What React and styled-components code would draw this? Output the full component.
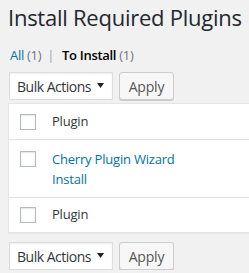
import React from "react";
import styled, { createGlobalStyle } from "styled-components";

const GlobalStyle = createGlobalStyle`
    html, body {
        margin: 0;
        padding: 0;
        background: #f1f1f1;
        overflow: hidden;
    }
    body {
        font-family: "Open Sans", "Noto Sans", sans-serif;
        font-size: 13px;
        letter-spacing: -0.2px;
        color: #23282d;
    }
`;

function BulkBar({ bottom }) {
    return (
        <TableNav $bottom={bottom}>
            <Select>
                <span>Bulk Actions</span>
                <Arrow width="7" height="5" viewBox="0 0 7 5">
                    <polygon points="0,0 7,0 3.5,5" fill="#222" />
                </Arrow>
            </Select>
            <Button>Apply</Button>
        </TableNav>
    );
}

function App() {
    const rows = [
        { kind: "head", name: "Plugin" },
        { kind: "body", name: "Cherry Plugin Wizard", action: "Install" },
        { kind: "foot", name: "Plugin" },
    ];

    return (
        <Wrap>
            <GlobalStyle />
            <Title>Install Required Plugins</Title>
            <Filters>
                <FilterLink href="#">All</FilterLink>
                <Count> (1)</Count>
                <Sep>|</Sep>
                <Current>To Install</Current>
                <Count> (1)</Count>
            </Filters>
            <BulkBar />
            <Table>
                {rows.map((row, i) => (
                    <Row key={i} $kind={row.kind}>
                        <CheckCell $kind={row.kind}>
                            <Checkbox />
                        </CheckCell>
                        <NameCell $kind={row.kind}>
                            {row.kind === "body" ? (
                                <>
                                    <PluginLink href="#">{row.name}</PluginLink>
                                    <ActionLink href="#">{row.action}</ActionLink>
                                </>
                            ) : (
                                row.name
                            )}
                        </NameCell>
                    </Row>
                ))}
            </Table>
            <BulkBar bottom />
        </Wrap>
    );
}
export default App;

const Wrap = styled.div`
    padding: 0 0 0 8px;
    width: 300px;
`;
const Title = styled.h1`
    margin: 0;
    padding: 3px 0 0 0;
    font-size: 22px;
    font-weight: 400;
    line-height: 29px;
    letter-spacing: -0.25px;
    color: #23282d;
    white-space: nowrap;
`;
const Filters = styled.div`
    display: flex;
    align-items: baseline;
    margin-top: 12px;
    padding-left: 2px;
    line-height: 22px;
    white-space: pre;
    letter-spacing: -0.3px;
`;
const FilterLink = styled.a`
    color: #0073aa;
    text-decoration: none;
`;
const Current = styled.span`
    color: #000;
    font-weight: 600;
`;
const Count = styled.span`
    color: #72777c;
`;
const Sep = styled.span`
    color: #a0a5aa;
    margin: 0 8px 0 6px;
`;
const TableNav = styled.div`
    display: flex;
    gap: 6px;
    margin-top: ${(p) => (p.$bottom ? "9px" : "6px")};
    padding-left: 1px;
`;
const Select = styled.div`
    box-sizing: border-box;
    display: flex;
    align-items: center;
    justify-content: space-between;
    width: 104px;
    height: 28px;
    padding: 0 8px 0 7px;
    background: #fff;
    border: 1px solid #ddd;
    box-shadow: inset 0 1px 2px rgba(0, 0, 0, 0.07);
    color: #32373c;
    font-size: 14px;
    letter-spacing: -0.5px;
`;
const Arrow = styled.svg`
    display: block;
    margin-top: -1px;
`;
const Button = styled.div`
    box-sizing: border-box;
    display: flex;
    align-items: center;
    justify-content: center;
    width: 55px;
    height: 28px;
    background: #f7f7f7;
    border: 1px solid #ccc;
    border-radius: 3px;
    box-shadow: 0 1px 0 #ccc;
    color: #555;
    font-size: 14px;
`;
const Table = styled.div`
    margin-top: 3px;
    background: #fff;
    border: 1px solid #e5e5e5;
    box-shadow: 0 1px 1px rgba(0, 0, 0, 0.04);
`;
const Row = styled.div`
    display: flex;
    box-sizing: border-box;
    height: ${(p) => (p.$kind === "body" ? "58px" : p.$kind === "head" ? "36px" : "34px")};
    border-bottom: ${(p) => (p.$kind === "foot" ? "none" : "1px solid #e1e1e1")};
`;
const CheckCell = styled.div`
    width: 43px;
    padding: ${(p) => (p.$kind === "foot" ? "9px" : p.$kind === "head" ? "10px" : "11px")} 0 0 11px;
    box-sizing: border-box;
`;
const Checkbox = styled.div`
    box-sizing: border-box;
    width: 16px;
    height: 16px;
    background: #fff;
    border: 1px solid #b4b9be;
    box-shadow: inset 0 1px 2px rgba(0, 0, 0, 0.1);
`;
const NameCell = styled.div`
    display: flex;
    flex-direction: column;
    padding-top: ${(p) => (p.$kind === "body" ? "9px" : p.$kind === "head" ? "8px" : "7px")};
    line-height: ${(p) => (p.$kind === "body" ? "20px" : "18px")};
    font-size: 13px;
    color: #32373c;
`;
const PluginLink = styled.a`
    color: #0073aa;
    text-decoration: none;
`;
const ActionLink = styled.a`
    color: #0073aa;
    text-decoration: none;
`;
